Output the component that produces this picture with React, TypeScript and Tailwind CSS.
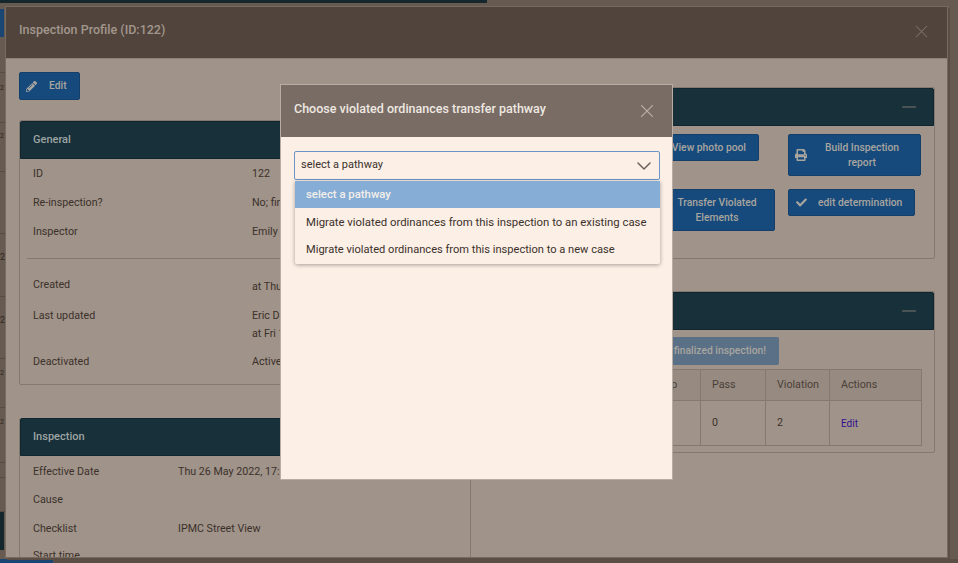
import React from 'react';
import { ChevronDown, Minus, X } from 'lucide-react';
import { FaCheck, FaPencilAlt, FaPrint } from 'react-icons/fa';

const Row = ({ label, value, h, valueClass = '', labelClass = 'w-[219px]' }: { label: string; value: React.ReactNode; h: string; valueClass?: string; labelClass?: string }) => (
  <div className={`flex ${h}`}>
    <div className={`shrink-0 ${labelClass}`}>{label}</div>
    <div className={`whitespace-nowrap ${valueClass}`}>{value}</div>
  </div>
);

const PanelHead = ({ title, collapse }: { title?: string; collapse?: boolean }) => (
  <div className="flex h-[38px] items-center justify-between rounded-t-[2px] border border-[#0f2630] bg-[#17303a] px-[12px] text-[11px] font-medium text-[#9fa5a3]">
    <span>{title}</span>
    {collapse && <Minus className="mr-px h-[22px] w-[22px] text-[#7f786f]" strokeWidth={1.3} />}
  </div>
);

const Btn = ({ children, className = '' }: { children: React.ReactNode; className?: string }) => (
  <div className={`flex items-center rounded-[2px] border border-[#143f6b] bg-[#174a7c] text-[10.3px] font-medium text-[#a8a59f] ${className}`}>{children}</div>
);

const Strip = ({ h, children }: { h: string; children?: React.ReactNode }) => (
  <div className={`${h} w-[5px] overflow-hidden border-b border-[#574b42] leading-[10px] text-[#2f2721]`}>{children}</div>
);

export default function App() {
  return (
    <div className="relative h-[563px] w-[958px] overflow-hidden bg-[#675a50] font-['Roboto',sans-serif] text-[10.7px] text-[#3b312b]">
      {/* page behind the modal */}
      <div className="h-[3px] w-[487px] bg-[#13272d]" />
      <div className="h-[6px]" />
      <div className="h-[28px] w-[4px] bg-[#1a4673]" />
      <Strip h="h-[36px]" />
      <Strip h="h-[50px]"><div className="pt-[10px] text-[7px]">2</div></Strip>
      <Strip h="h-[49px]"><div className="pt-[8px] text-[7px]">2</div></Strip>
      <Strip h="h-[62px]" />
      <Strip h="h-[63px]"><div className="pt-[18px] text-[9px]">2</div></Strip>
      <Strip h="h-[62px]"><div className="pt-[18px] text-[9px]">2</div></Strip>
      <Strip h="h-[49px]"><div className="pt-[9px] text-[7px]">2</div></Strip>
      <Strip h="h-[55px]"><div className="pt-[9px] text-[7px]">2</div></Strip>
      <Strip h="h-[15px]" />
      <Strip h="h-[34px]" />
      <div className="h-[38px] w-[4px] bg-[#13272d]" />
      <div className="absolute bottom-0 left-0 h-[4px] w-[958px] bg-[#5a4e45]">
        <div className="h-[4px] w-[53px] bg-[#1a4673]" />
      </div>

      {/* inspection profile modal */}
      <div className="absolute left-[5px] top-[6px] flex h-[552px] w-[943px] flex-col overflow-hidden border border-[#776a60] bg-[#a09389] shadow-[2px_2px_0_#5a4e45]">
        <div className="flex h-[52px] shrink-0 items-start justify-between border-b border-[#8e8278] bg-[#51443c] pl-[13px] pr-[15px] pt-[14px]">
          <span className="text-[12.5px] font-medium leading-[17px] text-[#a2978d]">Inspection Profile (ID:122)</span>
          <X className="h-[21px] w-[21px] text-[#7d7268]" strokeWidth={1.2} />
        </div>
        <div className="flex gap-[13px] pl-[13px]">
          <div className="w-[452px] shrink-0">
            <Btn className="mt-[13px] h-[28px] w-[61px] pl-[6px]">
              <FaPencilAlt className="h-[11px] w-[11px]" />
              <span className="ml-[12px]">Edit</span>
            </Btn>
            <div className="mt-[20px] h-[265px] rounded-[2px] border border-[#85786e]">
              <PanelHead title="General" />
              <div className="px-[13px] pt-[8px] leading-[14px]">
                <Row label="ID" value="122" h="h-[29px]" />
                <Row label="Re-inspection?" value="No; first" h="h-[29px]" />
                <Row label="Inspector" value="Emily" h="h-[33px]" />
                <div className="-mx-[6px] mb-[19px] h-px bg-[#85786e]" />
                <Row label="Created" value="at Thu" h="h-[31px]" valueClass="pt-[2px]" />
                <Row label="Last updated" value={<><div>Eric Darsow</div><div className="mt-[4px]">at Fri 1</div></>} h="h-[46px]" />
                <Row label="Deactivated" value="Active" h="h-[20px]" />
              </div>
            </div>
            <div className="mt-[33px] h-[200px] rounded-t-[2px] border-x border-[#85786e]">
              <PanelHead title="Inspection" />
              <div className="px-[13px] pt-[9px] leading-[14px]">
                <Row label="Effective Date" value="Thu 26 May 2022, 17:00" h="h-[28px]" labelClass="w-[145px]" />
                <Row label="Cause" value="" h="h-[29px]" labelClass="w-[145px]" />
                <Row label="Checklist" value="IPMC Street View" h="h-[27px]" labelClass="w-[145px]" />
                <Row label="Start time" value="" h="h-[20px]" labelClass="w-[145px]" />
              </div>
            </div>
          </div>

          <div className="w-[451px] shrink-0">
            <div className="mt-[28px] h-[172px] rounded-[2px] border border-[#85786e]">
              <PanelHead collapse />
              <div className="grid grid-cols-[277px_1fr] gap-x-[13px] pl-[13px] pt-[8px]">
                <div className="flex justify-end pr-[16px]">
                  <Btn className="h-[27px] w-[120px] justify-end pr-[12px]">View photo pool</Btn>
                </div>
                <Btn className="h-[42px] w-[133px] pl-[6px] pr-[10px] text-center leading-[15px]">
                  <FaPrint className="h-[12px] w-[12px] shrink-0" />
                  <span className="flex-1 pl-[7px]">Build Inspection<br />report</span>
                </Btn>
                <div className="mt-[13px] flex justify-end">
                  <Btn className="h-[42px] w-[120px] justify-center pl-[4px] text-center leading-[15px]">
                    <span>Transfer Violated<br />Elements</span>
                  </Btn>
                </div>
                <Btn className="mt-[13px] h-[27px] w-[127px] pl-[7px]">
                  <FaCheck className="h-[11px] w-[11px]" />
                  <span className="ml-[11px]">edit determination</span>
                </Btn>
              </div>
            </div>

            <div className="mt-[32px] h-[162px] rounded-[2px] border border-[#85786e]">
              <PanelHead collapse />
              <div className="pl-[13px] pt-[7px]">
                <div className="flex justify-end pr-[155px]">
                  <div className="flex h-[28px] w-[150px] items-center justify-end rounded-[2px] bg-[#5a7086] pr-[13px] text-[10.3px] font-medium text-[#a8a59f]">
                    finalized inspection!
                  </div>
                </div>
                <table className="mt-[3px] w-[423px] translate-y-px table-fixed border-collapse border border-[#85786e]">
                  <colgroup>
                    <col className="w-[147px]" />
                    <col className="w-[55px]" />
                    <col className="w-[65px]" />
                    <col className="w-[64px]" />
                    <col className="w-[92px]" />
                  </colgroup>
                  <thead>
                    <tr className="h-[31px] bg-[#978a80] text-left text-[#4a3f38]">
                      {['Name', 'Skip', 'Pass', 'Violation', 'Actions'].map((t) => (
                        <th key={t} className="border border-[#85786e] px-[11px] font-normal">{t}</th>
                      ))}
                    </tr>
                  </thead>
                  <tbody>
                    <tr className="h-[45px]">
                      <td className="border border-[#85786e] px-[11px]" />
                      <td className="border border-[#85786e] px-[11px]" />
                      <td className="border border-[#85786e] px-[11px]">0</td>
                      <td className="border border-[#85786e] px-[11px]">2</td>
                      <td className="border border-[#85786e] px-[11px] text-[10px] text-[#33108f]">Edit</td>
                    </tr>
                  </tbody>
                </table>
              </div>
            </div>
          </div>
        </div>
      </div>

      {/* transfer pathway dialog */}
      <div className="absolute left-[280px] top-[84px] h-[396px] w-[393px] border border-[#b8aca3] bg-[#fcefe6]">
        <div className="flex h-[52px] items-start justify-between bg-[#786c65] pl-[13px] pr-[14px] pt-[15px]">
          <span className="text-[12.5px] font-medium leading-[17px] text-[#efe8e1]">Choose violated ordinances transfer pathway</span>
          <X className="h-[22px] w-[22px] text-[#b5aca4]" strokeWidth={1.2} />
        </div>
        <div className="px-[13px] pt-[14px]">
          <div className="flex h-[29px] w-[366px] items-center justify-between rounded-[2px] border border-[#6b95c9] pl-[6px] pr-[3px] text-[11px] text-[#3b312b]">
            <span>select a pathway</span>
            <ChevronDown className="h-[24px] w-[24px] text-[#6b625b]" strokeWidth={1.5} />
          </div>
          <div className="ml-px mt-px w-[365px] rounded-b-[2px] text-[11.35px] shadow-[0_1px_4px_rgba(0,0,0,0.35)]">
            <div className="flex h-[27px] items-center bg-[#86add6] pl-[11px] pt-px font-medium text-[#f4efe9]">select a pathway</div>
            <div className="flex h-[28px] items-center pl-[11px] pt-[2px] text-[#3b312b]">Migrate violated ordinances from this inspection to an existing case</div>
            <div className="flex h-[28px] items-center pl-[11px] pt-px text-[11.1px] text-[#3b312b]">Migrate violated ordinances from this inspection to a new case</div>
          </div>
        </div>
      </div>
    </div>
  );
}
